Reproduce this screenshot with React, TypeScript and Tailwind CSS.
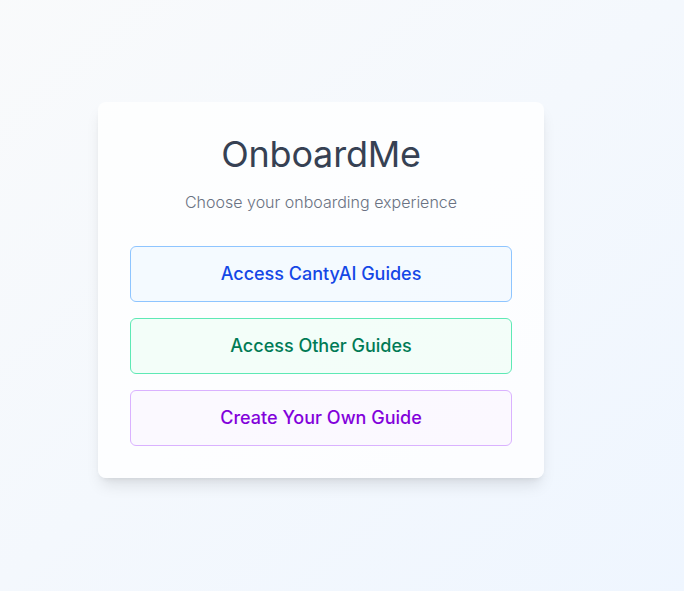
const App = () => {
  return (
    <main
      className="min-h-screen bg-gradient-to-br from-gray-50 to-blue-50 flex items-center justify-center pr-[42px] pb-[11px]"
      style={{ fontFamily: "Inter, 'Noto Sans', sans-serif" }}
    >
      {/* Onboarding card */}
      <section className="w-[446px] bg-white/80 rounded-lg shadow-lg p-8 text-center">
        <h1 className="text-4xl leading-10 text-gray-700 mb-4 tracking-[-0.2px]">
          OnboardMe
        </h1>
        <p className="text-base font-light text-gray-500 mb-8">
          Choose your onboarding experience
        </p>
        <div className="flex flex-col gap-4">
          <button className="h-14 rounded-md border border-blue-300 bg-blue-50/60 text-blue-700 text-lg font-medium">
            Access CantyAI Guides
          </button>
          <button className="h-14 rounded-md border border-emerald-300 bg-emerald-50/60 text-emerald-700 text-lg font-medium">
            Access Other Guides
          </button>
          <button className="h-14 rounded-md border border-purple-300 bg-purple-50/60 text-purple-700 text-lg font-medium">
            Create Your Own Guide
          </button>
        </div>
      </section>
    </main>
  );
};

export default App;
